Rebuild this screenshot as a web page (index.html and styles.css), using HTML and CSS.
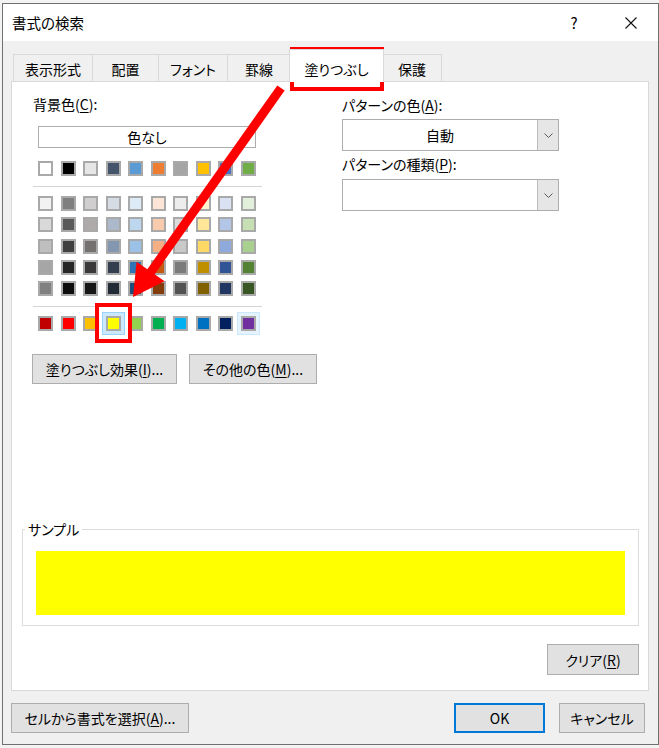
FILE: index.html
```html
<!DOCTYPE html>
<html lang="ja">
<head>
<meta charset="utf-8">
<title>書式の検索</title>
<link rel="stylesheet" href="styles.css">
</head>
<body>
<div class="dialog">
  <div class="titlebar">
    <span class="title">書式の検索</span>
    <span class="help">?</span>
    <span class="close"><svg width="12" height="12" viewBox="0 0 12 12"><path d="M0.5 0.5 L11.5 11.5 M11.5 0.5 L0.5 11.5" stroke="#111" stroke-width="1.1" fill="none"/></svg></span>
  </div>
  <div class="tabs">
    <div class="tab t1">表示形式</div>
    <div class="tab t2">配置</div>
    <div class="tab t3">フォント</div>
    <div class="tab t4">罫線</div>
    <div class="tab t5 active">塗りつぶし</div>
    <div class="tab t6">保護</div>
  </div>
  <div class="panel">
    <div class="top">
      <div class="left">
        <div class="label l1">背景色(<span class="u">C</span>):</div>
        <div class="nashi">色なし</div>
        <div class="swrow r1">
          <span class="sw" style="background:#ffffff"></span><span class="sw" style="background:#000000"></span><span class="sw" style="background:#e7e6e6"></span><span class="sw" style="background:#44546a"></span><span class="sw" style="background:#5b9bd5"></span><span class="sw" style="background:#ed7d31"></span><span class="sw" style="background:#a5a5a5"></span><span class="sw" style="background:#ffc000"></span><span class="sw" style="background:#4472c4"></span><span class="sw" style="background:#70ad47"></span>
        </div>
        <div class="sep s1"></div>
        <div class="swgrid">
          <div class="swrow">
            <span class="sw" style="background:#f2f2f2"></span><span class="sw" style="background:#7f7f7f"></span><span class="sw" style="background:#d0cece"></span><span class="sw" style="background:#d6dce4"></span><span class="sw" style="background:#ddebf7"></span><span class="sw" style="background:#fce4d6"></span><span class="sw" style="background:#ededed"></span><span class="sw" style="background:#fff2cc"></span><span class="sw" style="background:#d9e1f2"></span><span class="sw" style="background:#e2efda"></span>
          </div>
          <div class="swrow">
            <span class="sw" style="background:#d9d9d9"></span><span class="sw" style="background:#595959"></span><span class="sw" style="background:#aeaaaa"></span><span class="sw" style="background:#acb9ca"></span><span class="sw" style="background:#bdd7ee"></span><span class="sw" style="background:#f8cbad"></span><span class="sw" style="background:#dbdbdb"></span><span class="sw" style="background:#ffe699"></span><span class="sw" style="background:#b4c6e7"></span><span class="sw" style="background:#c6e0b4"></span>
          </div>
          <div class="swrow">
            <span class="sw" style="background:#bfbfbf"></span><span class="sw" style="background:#404040"></span><span class="sw" style="background:#757171"></span><span class="sw" style="background:#8497b0"></span><span class="sw" style="background:#9bc2e6"></span><span class="sw" style="background:#f4b084"></span><span class="sw" style="background:#c9c9c9"></span><span class="sw" style="background:#ffd966"></span><span class="sw" style="background:#8ea9db"></span><span class="sw" style="background:#a9d08e"></span>
          </div>
          <div class="swrow">
            <span class="sw" style="background:#a6a6a6"></span><span class="sw" style="background:#262626"></span><span class="sw" style="background:#3a3838"></span><span class="sw" style="background:#333f4f"></span><span class="sw" style="background:#2f75b5"></span><span class="sw" style="background:#c65911"></span><span class="sw" style="background:#7b7b7b"></span><span class="sw" style="background:#bf8f00"></span><span class="sw" style="background:#305496"></span><span class="sw" style="background:#548235"></span>
          </div>
          <div class="swrow">
            <span class="sw" style="background:#808080"></span><span class="sw" style="background:#0d0d0d"></span><span class="sw" style="background:#161616"></span><span class="sw" style="background:#222b35"></span><span class="sw" style="background:#1f4e78"></span><span class="sw" style="background:#833c0c"></span><span class="sw" style="background:#525252"></span><span class="sw" style="background:#806000"></span><span class="sw" style="background:#203764"></span><span class="sw" style="background:#375623"></span>
          </div>
        </div>
        <div class="sep s2"></div>
        <div class="swrow r7">
          <span class="sw" style="background:#c00000"></span><span class="sw" style="background:#ff0000"></span><span class="sw" style="background:#ffc000"></span><span class="sw selected" style="background:#ffff00"></span><span class="sw" style="background:#92d050"></span><span class="sw" style="background:#00b050"></span><span class="sw" style="background:#00b0f0"></span><span class="sw" style="background:#0070c0"></span><span class="sw" style="background:#002060"></span><span class="sw hover" style="background:#7030a0"></span>
        </div>
        <div class="btnrow">
          <button class="btn effect">塗りつぶし効果(<span class="u">I</span>)...</button>
          <button class="btn other">その他の色(<span class="u">M</span>)...</button>
        </div>
      </div>
      <div class="right">
        <div class="label l2">パターンの色(<span class="u">A</span>):</div>
        <div class="dd">
          <span class="dd-text">自動</span>
          <span class="dd-arrow"><svg width="9" height="5" viewBox="0 0 9 5"><polyline points="0.5,0.5 4.5,4.5 8.5,0.5" fill="none" stroke="#5a5a5a"/></svg></span>
        </div>
        <div class="label l3">パターンの種類(<span class="u">P</span>):</div>
        <div class="dd dd2">
          <span class="dd-text"></span>
          <span class="dd-arrow"><svg width="9" height="5" viewBox="0 0 9 5"><polyline points="0.5,0.5 4.5,4.5 8.5,0.5" fill="none" stroke="#5a5a5a"/></svg></span>
        </div>
      </div>
    </div>
    <fieldset class="sample">
      <legend>サンプル</legend>
      <div class="sample-box"></div>
    </fieldset>
    <button class="btn clear">クリア(<span class="u">R</span>)</button>
  </div>
  <div class="footer">
    <button class="btn pick">セルから書式を選択(<span class="u">A</span>)...</button>
    <button class="btn ok">OK</button>
    <button class="btn cancel">キャンセル</button>
  </div>
</div>
<svg class="annot" width="659" height="748" viewBox="0 0 659 748">
  <rect x="292" y="49" width="90" height="40" fill="none" stroke="#ff0000" stroke-width="4"/>
  <rect x="97" y="305" width="33" height="36" fill="none" stroke="#ff0000" stroke-width="4"/>
  <line x1="281" y1="88" x2="148" y2="276" stroke="#ff0000" stroke-width="9"/>
  <polygon points="133,297 136.6,261.8 164.6,281.2" fill="#ff0000"/>
</svg>
</body>
</html>
```

FILE: styles.css
```css
* { box-sizing: border-box; }
html, body { margin: 0; padding: 0; }
body {
  width: 659px;
  height: 748px;
  overflow: hidden;
  position: relative;
  background: #f3f3f3;
  font-family: "Noto Sans CJK JP", "Noto Sans", sans-serif;
  font-size: 14px;
  color: #000;
  font-feature-settings: "palt";
}
.dialog {
  margin: 3px 0 0 2px;
  width: 657px;
  height: 742px;
  border: 1px solid #707070;
  background: #f0f0f0;
  display: flex;
  flex-direction: column;
}
.titlebar {
  height: 37px;
  flex: none;
  background: #fff;
  display: flex;
  align-items: center;
  padding-left: 9px;
}
.title { flex: 1; font-size: 14.5px; line-height: 20px; }
.help { width: 20px; text-align: center; margin-right: 37px; font-size: 15px; line-height: 20px; }
.close { width: 20px; display: flex; justify-content: center; margin-right: 17px; }

.tabs {
  height: 40px;
  flex: none;
  padding: 8px 0 0 10px;
  display: flex;
  align-items: flex-end;
}
.tab {
  height: 27px;
  flex: none;
  border: 1px solid #d9d9d9;
  border-bottom: none;
  background: #f0f0f0;
  margin-left: -1px;
  display: flex;
  align-items: flex-end;
  justify-content: center;
  padding-bottom: 3px;
  line-height: 18px;
}
.t1 { width: 80px; margin-left: 0; }
.t2 { width: 67px; }
.t3 { width: 70px; }
.t4 { width: 64px; }
.t5 { width: 95px; }
.t6 { width: 60px; margin-left: -2px; }
.tab.active {
  height: 33px;
  margin-left: -2px;
  margin-bottom: -1px;
  background: #fff;
  position: relative;
  z-index: 1;
  padding-bottom: 4px;
}

.panel {
  height: 610px;
  flex: none;
  margin: 0 9px 0 8px;
  border: 1px solid #d9d9d9;
  background: #fff;
  display: flex;
  flex-direction: column;
}
.top { display: flex; padding-left: 21px; }
.left { width: 229px; flex: none; }
.right { width: 217px; flex: none; margin-left: 80px; }

.label { height: 18px; line-height: 18px; white-space: nowrap; }
.u { text-decoration: underline; text-underline-offset: 2px; text-decoration-thickness: 1px; }
.l1 { margin-top: 13px; }
.l2 { margin-top: 14px; }
.l3 { margin-top: 4px; }

.nashi {
  margin: 13px 0 0 5px;
  width: 218px;
  height: 22px;
  border: 1px solid #adadad;
  background: #fff;
  text-align: center;
  line-height: 20px;
}
.swrow { display: flex; gap: 7.5px; margin-left: 5px; }
.r1 { margin-top: 13px; }
.sw {
  width: 15px;
  height: 15px;
  flex: none;
  border: 2px solid #a9a9a9;
}
.sw.selected { box-shadow: 0 0 0 3px #cce8ff, 0 0 0 4px #99d1ff; }
.sw.hover { box-shadow: 0 0 0 3px #e5f3ff, 0 0 0 4px #cce8ff; }
.sep { width: 229px; height: 1px; background: #d4d4d4; }
.s1 { margin-top: 10px; }
.s2 { margin-top: 10px; }
.swgrid { margin-top: 9px; display: flex; flex-direction: column; gap: 6.25px; }
.r7 { margin-top: 9px; }

.btn {
  flex: none;
  font-family: inherit;
  font-size: 14px;
  font-feature-settings: "palt";
  color: #000;
  background: #e1e1e1;
  border: 1px solid #adadad;
  padding: 0;
  line-height: 18px;
  white-space: nowrap;
}
.btnrow { display: flex; margin: 23px 0 0 -1px; gap: 12px; width: 300px; }
.effect { width: 145px; height: 30px; }
.other { width: 128px; height: 30px; }

.dd {
  margin-top: 5px;
  height: 32px;
  border: 1px solid #adadad;
  background: #fff;
  display: flex;
}
.dd2 { margin-top: 6px; }
.dd-text { flex: 1; text-align: center; line-height: 30px; }
.dd-arrow {
  width: 21px;
  background: #e6e6e6;
  border-left: 1px solid #bcbcbc;
  display: flex;
  align-items: center;
  justify-content: center;
}

.sample {
  margin: 136px 9px 0 10px;
  padding: 0 13px 10px;
  border: 1px solid #dcdcdc;
  min-width: 0;
}
.sample legend {
  margin-left: -11px;
  padding: 0 3px;
  line-height: 18px;
  height: 18px;
}
.sample-box { margin-top: 13px; height: 64px; background: #ffff00; }
.clear { margin: 18px 9px 0 auto; width: 92px; height: 31px; }

.footer {
  flex: none;
  display: flex;
  margin-top: 12px;
  padding: 0 13px 0 8px;
  gap: 14px;
}
.pick { width: 178px; height: 30px; }
.ok { margin-left: auto; width: 91px; height: 30px; border: 2px solid #0078d7; }
.cancel { width: 86px; height: 30px; }

.annot { position: absolute; left: 0; top: 0; pointer-events: none; }
```
